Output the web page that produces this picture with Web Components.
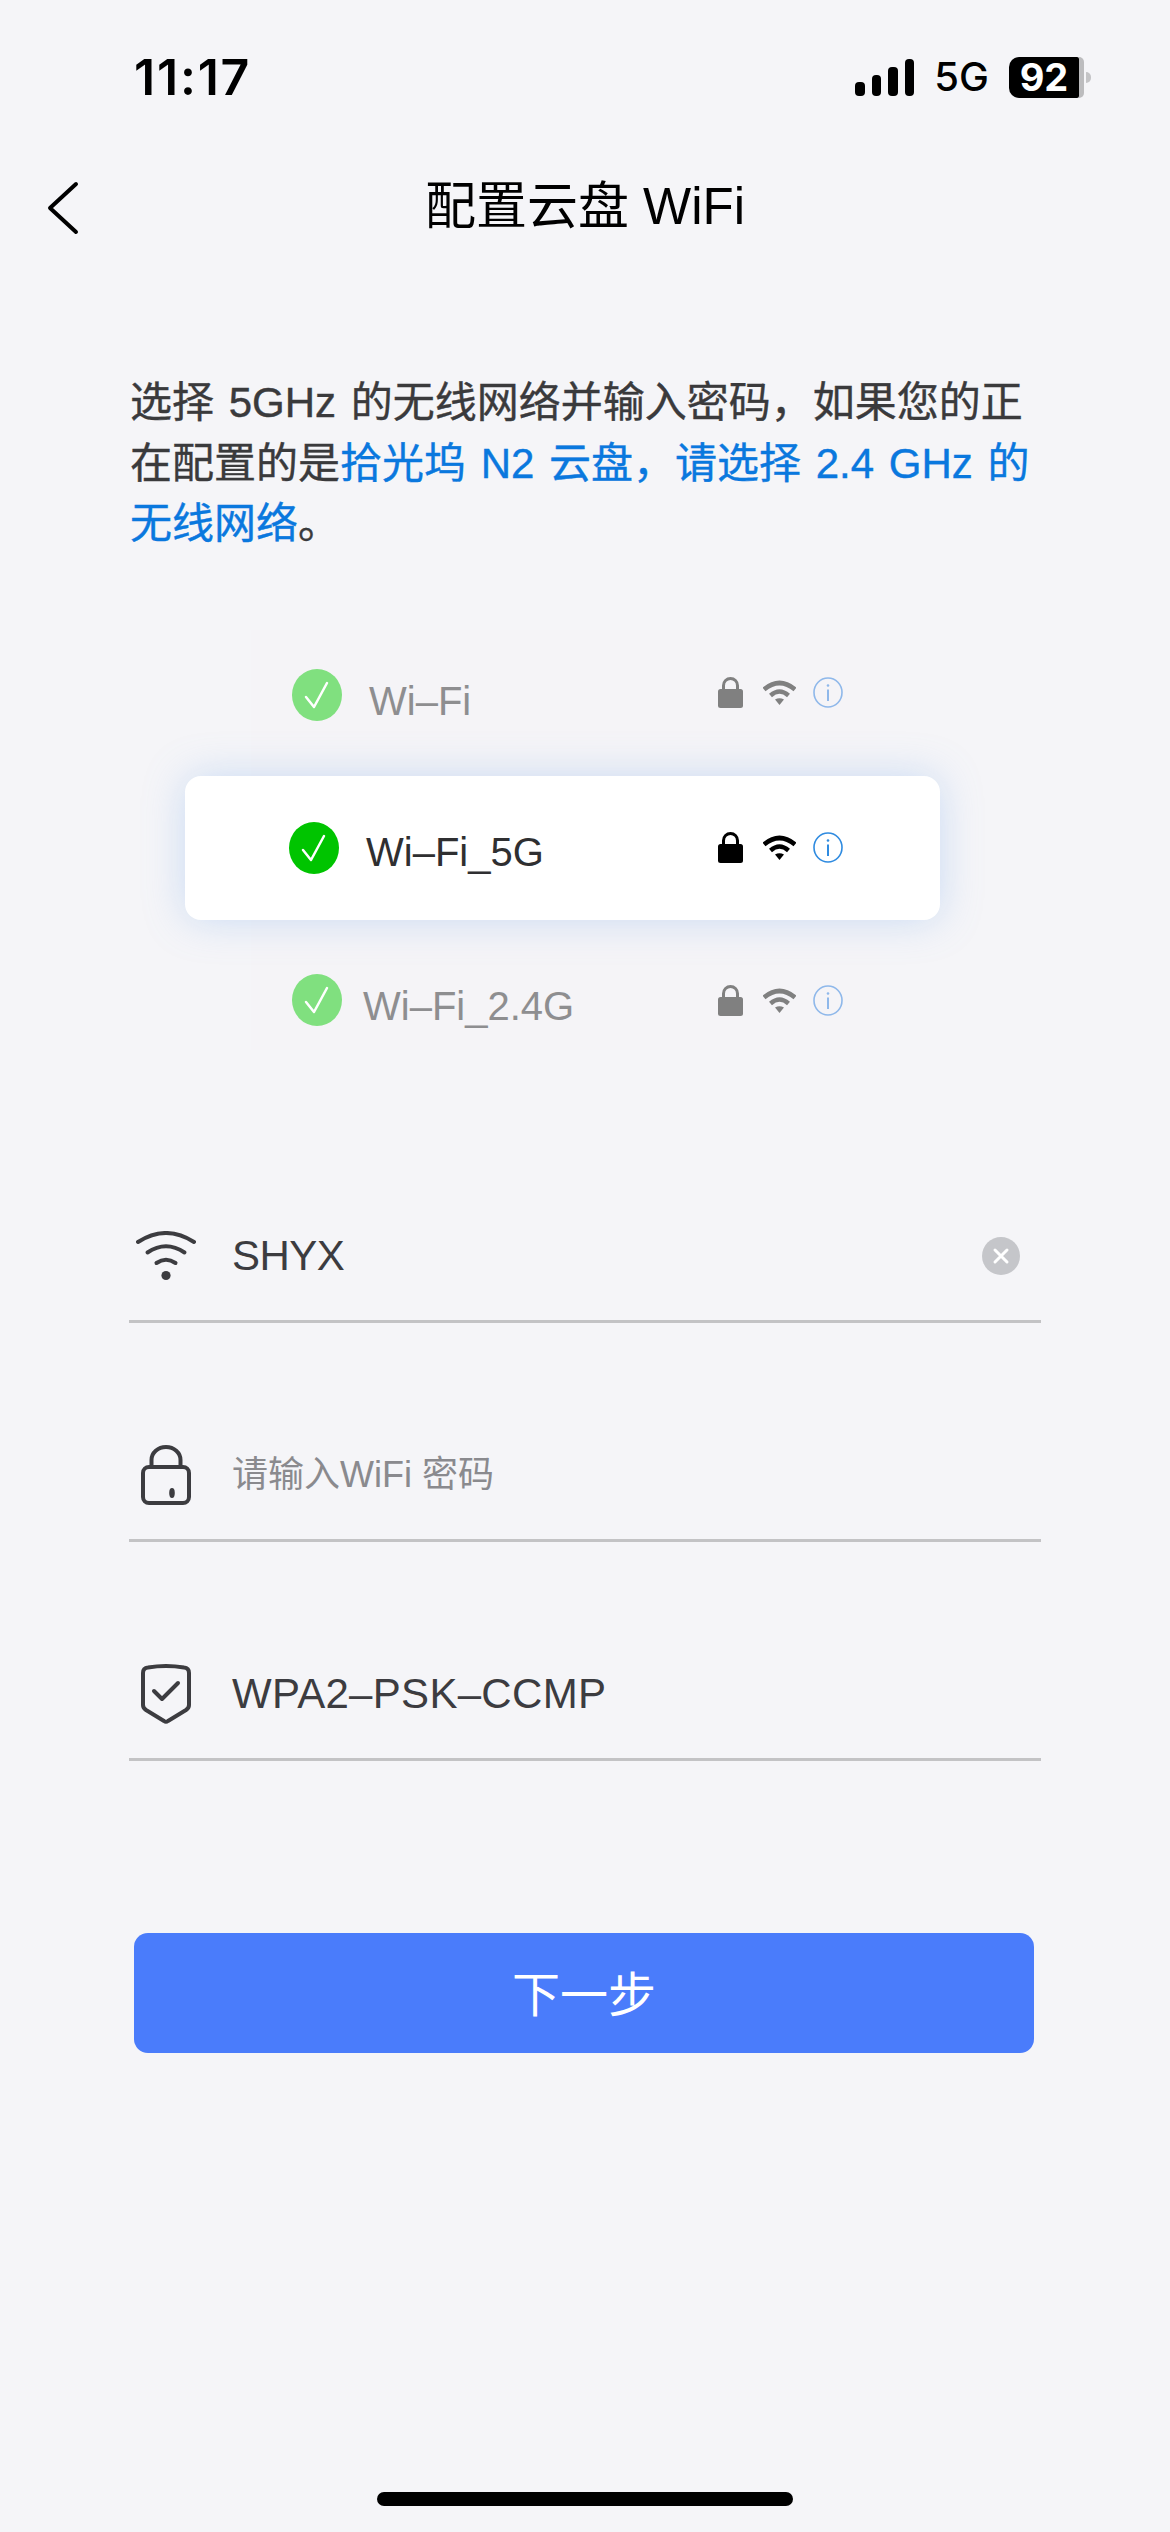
<!DOCTYPE html>
<html lang="zh">
<head>
<meta charset="utf-8">
<title>配置云盘 WiFi</title>
<style>
html, body { margin: 0; padding: 0; background: #f5f5f8; }
</style>
</head>
<body>
<wifi-setup-page>
    <status-bar slot="top" time="11:17" net="5G" level="92"></status-bar>
    <nav-bar slot="top">配置云盘 WiFi</nav-bar>
    <hint-text slot="top">选择 5GHz 的无线网络并输入密码，如果您的正<br>在配置的是<span>拾光坞 N2 云盘，请选择 2.4 GHz 的<br>无线网络</span>。</hint-text>
    <wifi-list slot="top">
        <wifi-row name="Wi–Fi" style="--h:146px; --pb:16px; --gap:27px; --pad:41px; --shift:6px; --ishift:-2.5px"></wifi-row>
        <wifi-row name="Wi–Fi_5G" selected style="--gap:27px; --pad:104px; --shift:4px; --ishift:-1px"></wifi-row>
        <wifi-row name="Wi–Fi_2.4G" style="--h:130px; --pt:30px; --gap:21px; --pad:41px; --shift:6px; --ishift:0.5px"></wifi-row>
    </wifi-list>
    <form-field slot="top" icon="wifi" clearable style="letter-spacing:-0.5px">SHYX</form-field>
    <form-field slot="top" icon="lock" placeholder>请输入WiFi 密码</form-field>
    <form-field slot="top" icon="shield" style="letter-spacing:0.3px">WPA2–PSK–CCMP</form-field>
    <next-button slot="top">下一步</next-button>
</wifi-setup-page>

<script>
const FONT = '"Liberation Sans", "Noto Sans CJK SC", sans-serif';

const pageTpl = document.createElement('template');
pageTpl.innerHTML = `
<style>
:host {
    display: flex;
    flex-direction: column;
    width: 1170px;
    height: 2532px;
    overflow: hidden;
    background: #f5f5f8;
    color: #000;
    font-family: ${FONT};
}
.home {
    width: 416px;
    height: 14px;
    border-radius: 7px;
    background: #000;
    margin: auto auto 26px;
}
</style>
<slot name="top"></slot>
<div class="home"></div>
`;

class WifiSetupPage extends HTMLElement {
    constructor() {
        super();
        this.attachShadow({ mode: 'open' }).appendChild(pageTpl.content.cloneNode(true));
    }
}
customElements.define('wifi-setup-page', WifiSetupPage);

const statusTpl = document.createElement('template');
statusTpl.innerHTML = `
<style>
:host {
    display: flex;
    align-items: center;
    height: 154px;
    padding: 0 79px 0 134px;
    box-sizing: border-box;
}
.time { font: 600 50px/1 Inter, sans-serif; letter-spacing: 1.8px; margin-right: auto; }
.bars { display: flex; align-items: flex-end; gap: 7px; height: 37px; margin-right: 20px; }
.bars i { display: block; width: 9.5px; border-radius: 4px; background: #000; }
.net { font: 500 40px/1 Inter, sans-serif; margin-right: 20px; }
.battery { display: flex; align-items: center; }
.level {
    width: 70px;
    height: 41px;
    border-radius: 10px 2px 2px 10px;
    background: #000;
    color: #fff;
    font: 700 38px/41px Inter, sans-serif;
    text-align: center;
}
.rest { width: 5px; height: 41px; border-radius: 0 8px 8px 0; background: #bcbcbe; }
.nub { width: 5px; height: 11px; border-radius: 0 5px 5px 0; background: #c4c4c6; margin-left: 2px; }
</style>
<span class="time"></span>
<div class="bars">
    <i style="height:14px"></i><i style="height:21px"></i><i style="height:29px"></i><i style="height:37px"></i>
</div>
<span class="net"></span>
<div class="battery"><div class="level"></div><div class="rest"></div><div class="nub"></div></div>
`;

class StatusBar extends HTMLElement {
    constructor() {
        super();
        this._sR = this.attachShadow({ mode: 'open' });
        this._sR.appendChild(statusTpl.content.cloneNode(true));
    }
    connectedCallback() {
        this._sR.querySelector('.time').textContent = this.getAttribute('time');
        this._sR.querySelector('.net').textContent = this.getAttribute('net');
        this._sR.querySelector('.level').textContent = this.getAttribute('level');
    }
}
customElements.define('status-bar', StatusBar);

const navTpl = document.createElement('template');
navTpl.innerHTML = `
<style>
:host {
    display: grid;
    grid-template-columns: 134px 1fr 134px;
    align-items: center;
    height: 102px;
    font-size: 51px;
    line-height: 1;
    text-align: center;
}
svg { display: block; margin: 6px 0 0 46px; }
.title { padding-top: 2px; }
</style>
<svg width="34" height="54" viewBox="0 0 34 54" fill="none" stroke="#000" stroke-width="4" stroke-linecap="round" stroke-linejoin="round"><path d="M30 3 L4 27 L30 51"/></svg>
<div class="title"><slot></slot></div>
`;

class NavBar extends HTMLElement {
    constructor() {
        super();
        this.attachShadow({ mode: 'open' }).appendChild(navTpl.content.cloneNode(true));
    }
}
customElements.define('nav-bar', NavBar);

const hintTpl = document.createElement('template');
hintTpl.innerHTML = `
<style>
:host {
    display: block;
    margin: 117px 0 0 130px;
    width: 960px;
    font-size: 42px;
    word-spacing: 3px;
    line-height: 60.5px;
    color: #3a3a3c;
    -webkit-text-stroke: 0.4px currentColor;
}
::slotted(span) { color: #0a78de; }
</style>
<slot></slot>
`;

class HintText extends HTMLElement {
    constructor() {
        super();
        this.attachShadow({ mode: 'open' }).appendChild(hintTpl.content.cloneNode(true));
    }
}
customElements.define('hint-text', HintText);

const listTpl = document.createElement('template');
listTpl.innerHTML = `
<style>
:host {
    display: flex;
    flex-direction: column;
    width: 755px;
    margin: 75.5px 0 0 185px;
}
</style>
<slot></slot>
`;

class WifiList extends HTMLElement {
    constructor() {
        super();
        this.attachShadow({ mode: 'open' }).appendChild(listTpl.content.cloneNode(true));
    }
}
customElements.define('wifi-list', WifiList);

const rowTpl = document.createElement('template');
rowTpl.innerHTML = `
<style>
:host {
    display: flex;
    align-items: center;
    height: var(--h, 138px);
    margin: 0 60px 0 66px;
    padding: var(--pt, 0) 37px var(--pb, 0) var(--pad);
    box-sizing: border-box;
    background: #f5f4f7;
    color: #8e8e90;
    font-size: 40px;
    --tick: #80e07f;
    --glyph: #808080;
    --info: #8fb8ea;
}
:host([selected]) {
    position: relative;
    z-index: 1;
    height: 144px;
    margin: 0;
    padding-right: 97px;
    background: #fff;
    border-radius: 16px;
    box-shadow: 0 0 40px rgba(120, 170, 235, 0.34);
    color: #2f2f31;
    --tick: #00c400;
    --glyph: #000;
    --info: #2f8be0;
}
.tick { display: block; flex: none; }
.name { margin: calc(var(--shift) * 2) auto 0 var(--gap); line-height: 1; }
.icons { display: flex; align-items: center; margin-top: calc(var(--ishift) * 2); }
.icons svg { display: block; flex: none; }
</style>
<svg class="tick" width="50" height="52" viewBox="0 0 50 52">
    <ellipse cx="25" cy="26" rx="25" ry="26" fill="var(--tick)"/>
    <path d="M14 28 L22 38 L35 14" fill="none" stroke="#fff" stroke-width="2.5" stroke-linecap="round" stroke-linejoin="round"/>
</svg>
<span class="name"></span>
<div class="icons">
    <svg width="25" height="31" viewBox="0 0 25 31">
        <path d="M5.5 14 V8.5 a7 7 0 0 1 14 0 V14" fill="none" stroke="var(--glyph)" stroke-width="3"/>
        <rect x="0" y="12" width="25" height="19" rx="2.5" fill="var(--glyph)"/>
    </svg>
    <svg width="33" height="25" viewBox="0 0 33 25" style="margin-left:20px">
        <path d="M1 9.5 Q16.5 -3.5 32 9.5" fill="none" stroke="var(--glyph)" stroke-width="4.6"/>
        <path d="M7.5 15.5 Q16.5 7.5 25.5 15.5" fill="none" stroke="var(--glyph)" stroke-width="4.4"/>
        <path d="M12 19.5 Q16.5 17 21 19.5 L16.5 25 Z" fill="var(--glyph)"/>
    </svg>
    <svg width="30" height="31" viewBox="0 0 30 31" style="margin-left:17px">
        <ellipse cx="15" cy="15.5" rx="14" ry="14.5" fill="none" stroke="var(--info)" stroke-width="1.6"/>
        <circle cx="15" cy="8.5" r="1.3" fill="var(--info)"/>
        <path d="M15 12.5 V24" stroke="var(--info)" stroke-width="2"/>
    </svg>
</div>
`;

class WifiRow extends HTMLElement {
    constructor() {
        super();
        this._sR = this.attachShadow({ mode: 'open' });
        this._sR.appendChild(rowTpl.content.cloneNode(true));
    }
    connectedCallback() {
        this._sR.querySelector('.name').textContent = this.getAttribute('name');
    }
}
customElements.define('wifi-row', WifiRow);

const FIELD_ICONS = {
    wifi: `<svg width="60" height="50" viewBox="0 0 60 50" fill="none" stroke="#3c3c40" stroke-width="4" stroke-linecap="round">
        <path d="M2 11 Q30 -7 58 11"/><path d="M11.5 21.5 Q30 9 48.5 21.5"/><path d="M20.5 32 Q30 25.5 39.5 32"/>
        <circle cx="30" cy="44.5" r="4.6" fill="#3c3c40" stroke="none"/></svg>`,
    lock: `<svg width="50" height="60" viewBox="0 0 50 60" fill="none" stroke="#3c3c40" stroke-width="4">
        <path d="M10.5 22 V15 a14.5 13 0 0 1 29 0 V22"/>
        <rect x="2" y="22" width="46" height="36" rx="6"/>
        <ellipse cx="31" cy="48" rx="2.8" ry="5" fill="#3c3c40" stroke="none"/></svg>`,
    shield: `<svg width="50" height="60" viewBox="0 0 50 60" fill="none" stroke="#3c3c40" stroke-width="4" stroke-linejoin="round" stroke-linecap="round">
        <path d="M2 9 Q2 4 7 3.5 Q25 0.5 43 3.5 Q48 4 48 9 V41 Q48 44 45 46 L27 57 Q25 58.5 23 57 L5 46 Q2 44 2 41 Z"/>
        <path d="M13 27 L21 35 L37 19"/></svg>`
};

const fieldTpl = document.createElement('template');
fieldTpl.innerHTML = `
<style>
:host {
    display: flex;
    align-items: center;
    width: 912px;
    height: 136px;
    margin: 83px 0 0 129px;
    box-sizing: border-box;
    border-bottom: 3px solid #c3c3c5;
    padding-top: 4px;
    color: #3c3c40;
    font-size: 42px;
}
:host(:first-of-type) { margin-top: 137px; }
.icon { display: flex; justify-content: center; flex: none; width: 73px; margin-right: 30px; }
.icon svg { display: block; }
.text { flex: 1; line-height: 1; }
:host([placeholder]) .text { font-size: 36px; color: #8a8a8e; }
.clear { display: none; flex: none; margin-right: 21px; }
:host([clearable]) .clear { display: block; }
</style>
<div class="icon"></div>
<div class="text"><slot></slot></div>
<svg class="clear" width="38" height="38" viewBox="0 0 38 38">
    <circle cx="19" cy="19" r="19" fill="#c5c6ca"/>
    <path d="M13 13 L25 25 M25 13 L13 25" stroke="#fff" stroke-width="3" stroke-linecap="round"/>
</svg>
`;

class FormField extends HTMLElement {
    constructor() {
        super();
        this._sR = this.attachShadow({ mode: 'open' });
        this._sR.appendChild(fieldTpl.content.cloneNode(true));
    }
    connectedCallback() {
        this._sR.querySelector('.icon').innerHTML = FIELD_ICONS[this.getAttribute('icon')];
    }
}
customElements.define('form-field', FormField);

const btnTpl = document.createElement('template');
btnTpl.innerHTML = `
<style>
:host {
    display: flex;
    align-items: center;
    justify-content: center;
    width: 900px;
    height: 120px;
    margin: 172px 0 0 134px;
    padding-bottom: 5px;
    box-sizing: border-box;
    border-radius: 14px;
    background: #4a7cfb;
    color: #fff;
    font-size: 48px;
    cursor: pointer;
}
</style>
<slot></slot>
`;

class NextButton extends HTMLElement {
    constructor() {
        super();
        this.attachShadow({ mode: 'open' }).appendChild(btnTpl.content.cloneNode(true));
    }
}
customElements.define('next-button', NextButton);
</script>
</body>
</html>
